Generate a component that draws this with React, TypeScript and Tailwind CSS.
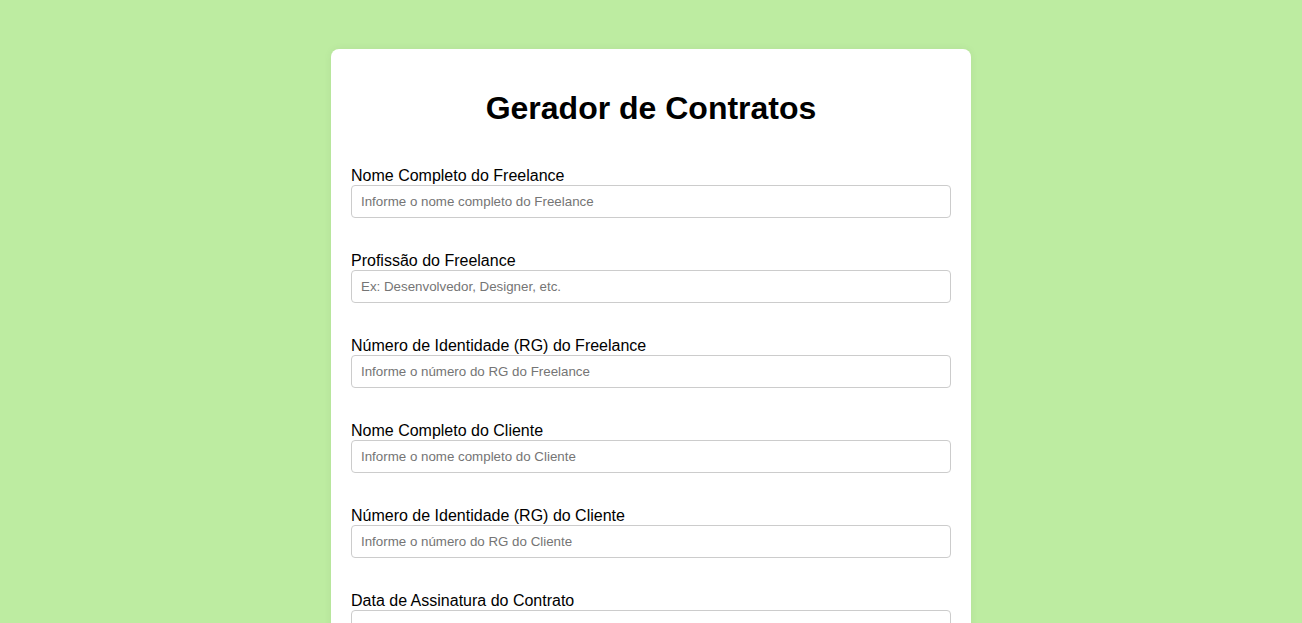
const FIELDS = [
  {
    id: "freelanceNome",
    label: "Nome Completo do Freelance",
    type: "text",
    placeholder: "Informe o nome completo do Freelance",
  },
  {
    id: "freelanceProfissao",
    label: "Profissão do Freelance",
    type: "text",
    placeholder: "Ex: Desenvolvedor, Designer, etc.",
  },
  {
    id: "freelanceRg",
    label: "Número de Identidade (RG) do Freelance",
    type: "text",
    placeholder: "Informe o número do RG do Freelance",
  },
  {
    id: "clienteNome",
    label: "Nome Completo do Cliente",
    type: "text",
    placeholder: "Informe o nome completo do Cliente",
  },
  {
    id: "clienteRg",
    label: "Número de Identidade (RG) do Cliente",
    type: "text",
    placeholder: "Informe o número do RG do Cliente",
  },
  {
    id: "dataAssinatura",
    label: "Data de Assinatura do Contrato",
    type: "text",
    placeholder: "",
  },
  {
    id: "valor",
    label: "Valor do Contrato (R$)",
    type: "text",
    placeholder: "Ex: 1500,00",
  },
];

export default function App() {
  return (
    <div className="min-h-screen w-full bg-[#bdeca1] pt-[49px] pb-10 font-['Liberation_Sans',Arial,sans-serif] text-black">
      <div className="mx-auto w-[640px] rounded-lg bg-white px-5 pt-5 pb-5 shadow-[0_0_8px_rgba(0,0,0,0.06)]">
        {/* Title */}
        <h1 className="mt-[21px] mb-[40px] text-center text-[32px] font-bold leading-[37px]">
          Gerador de Contratos
        </h1>

        <form className="flex flex-col gap-[34px]">
          {FIELDS.map((f) => (
            <div key={f.id}>
              <label htmlFor={f.id} className="block text-[16px] leading-[18px]">
                {f.label}
              </label>
              <input
                id={f.id}
                type={f.type}
                placeholder={f.placeholder}
                className="block h-[33px] w-full rounded border border-[#cccccc] bg-white px-[9px] text-[13.333px] text-black placeholder:text-[#757575] outline-none"
              />
            </div>
          ))}

          <button
            type="button"
            className="h-10 w-full rounded bg-[#4caf50] text-base font-bold text-white"
          >
            Gerar Contrato
          </button>
        </form>
      </div>
    </div>
  );
}
